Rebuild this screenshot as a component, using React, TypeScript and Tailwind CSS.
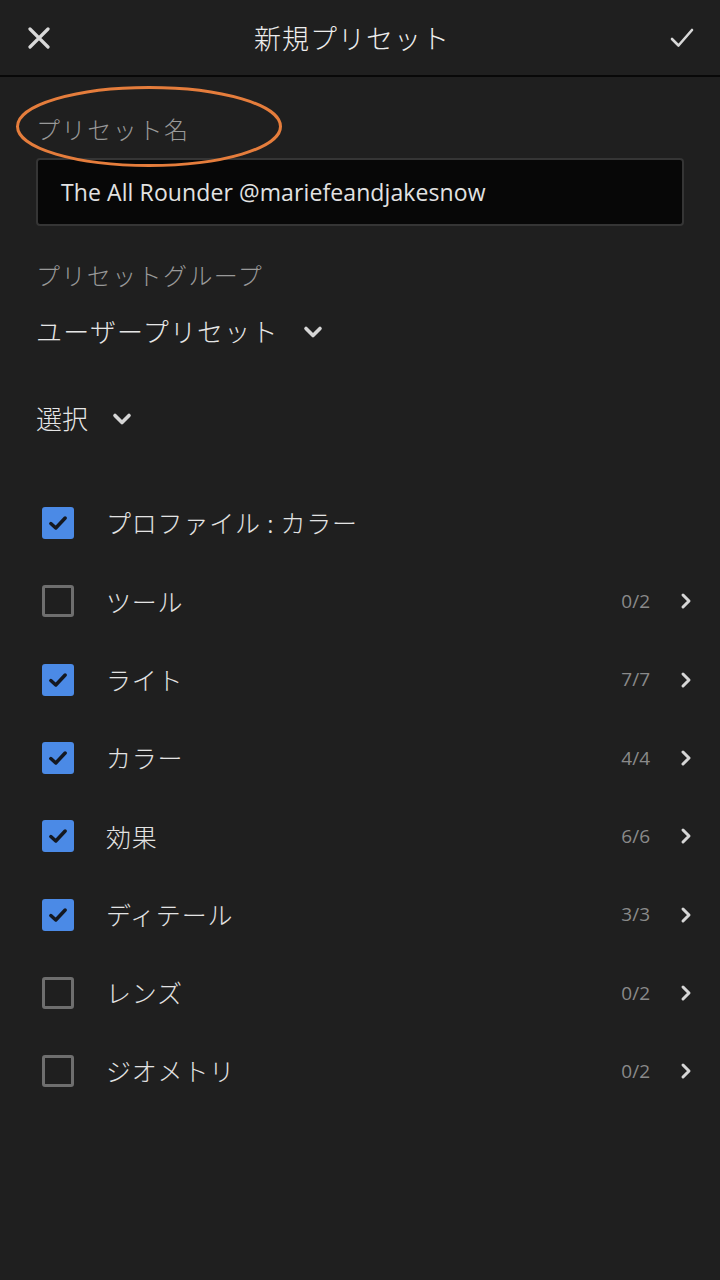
import React from "react";

const JP = { fontFamily: '"Noto Sans CJK JP", "Noto Sans", sans-serif' };

function Chevron({ className = "" }: { className?: string }) {
  return (
    <svg viewBox="0 0 20 14" className={className} fill="none">
      <path d="M3 3.5 L10 10.5 L17 3.5" stroke="#d6d6d6" strokeWidth="3.6" strokeLinecap="round" strokeLinejoin="round" />
    </svg>
  );
}

function ChevronRight() {
  return (
    <svg viewBox="0 0 12 18" className="w-[12px] h-[18px]" fill="none">
      <path d="M3 3 L9 9 L3 15" stroke="#d6d6d6" strokeWidth="3" strokeLinecap="round" strokeLinejoin="round" />
    </svg>
  );
}

function Box({ checked }: { checked: boolean }) {
  if (checked) {
    return (
      <div className="w-[32px] h-[32px] rounded-[3px] bg-[#4b8ae6] flex items-center justify-center">
        <svg viewBox="0 0 20 20" className="w-[22px] h-[22px]" fill="none">
          <path d="M3.5 10.5 L8 14.5 L16.5 5.5" stroke="#141820" strokeWidth="3.2" strokeLinecap="round" strokeLinejoin="round" />
        </svg>
      </div>
    );
  }
  return <div className="w-[32px] h-[32px] rounded-[3px] border-[3px] border-[#6e6e6e]" />;
}

const rows: { label: string; checked: boolean; count?: string }[] = [
  { label: "プロファイル : カラー", checked: true },
  { label: "ツール", checked: false, count: "0/2" },
  { label: "ライト", checked: true, count: "7/7" },
  { label: "カラー", checked: true, count: "4/4" },
  { label: "効果", checked: true, count: "6/6" },
  { label: "ディテール", checked: true, count: "3/3" },
  { label: "レンズ", checked: false, count: "0/2" },
  { label: "ジオメトリ", checked: false, count: "0/2" },
];

export default function App() {
  return (
    <div className="w-[720px] h-[1280px] bg-[#1f1f1f] relative overflow-hidden font-light" style={JP}>
      {/* Header */}
      <div className="h-[77px] border-b-2 border-[#080808] flex items-center justify-between px-[28px]">
        <svg viewBox="0 0 22 22" className="w-[22px] h-[22px]" fill="none">
          <path d="M2 2 L20 20 M20 2 L2 20" stroke="#d9d9d9" strokeWidth="3.2" strokeLinecap="round" />
        </svg>
        <div className="text-[27px] text-[#ededed] leading-none tracking-[1px] mr-[16px]">新規プリセット</div>
        <svg viewBox="0 0 24 20" className="w-[24px] h-[20px] mr-[-2px]" fill="none">
          <path d="M2 11 L8.5 17.5 L22 2" stroke="#d9d9d9" strokeWidth="2.6" strokeLinecap="round" strokeLinejoin="round" />
        </svg>
      </div>

      <div className="px-[36px] flex flex-col">
        <div className="mt-[34px] h-[36px] flex items-center text-[24px] text-[#999999] tracking-[1.6px]">プリセット名</div>
        <div className="mt-[11px] h-[68px] rounded-[4px] border-2 border-[#353535] bg-[#070707] flex items-center px-[23px]">
          <span className="text-[23px] text-[#e2e2e2] font-normal tracking-[0.1px]" style={{ fontFamily: '"Open Sans", "Noto Sans", sans-serif' }}>
            The All Rounder @mariefeandjakesnow
          </span>
        </div>

        <div className="mt-[31px] h-[36px] flex items-center text-[24px] text-[#999999] tracking-[1.4px]">プリセットグループ</div>
        <div className="mt-[17px] h-[40px] flex items-center gap-[24px] text-[26px] text-[#e6e6e6] tracking-[1.2px]">
          <span>ユーザープリセット</span>
          <Chevron className="w-[20px] h-[14px] mt-[4px]" />
        </div>

        <div className="mt-[47px] h-[40px] flex items-center gap-[24px] text-[26px] text-[#e6e6e6]">
          <span>選択</span>
          <Chevron className="w-[20px] h-[14px] mt-[4px]" />
        </div>

        <div className="mt-[47px] flex flex-col pl-[6px]">
          {rows.map((r, i) => (
            <div key={i} className="h-[78.3px] flex items-center">
              <Box checked={r.checked} />
              <span className="ml-[32px] text-[25px] text-[#e3e3e3] flex-1 tracking-[0.8px]">{r.label}</span>
              {r.count && (
                <>
                  <span className="text-[19px] text-[#8a8a8a] font-normal" style={{ fontFamily: '"Open Sans", "Noto Sans", sans-serif' }}>{r.count}</span>
                  <span className="ml-[30px] mr-[-8px] flex items-center">
                    <ChevronRight />
                  </span>
                </>
              )}
            </div>
          ))}
        </div>
      </div>

      {/* Annotation ellipse */}
      <svg className="absolute left-0 top-0 pointer-events-none" width="720" height="200" viewBox="0 0 720 200">
        <ellipse cx="149" cy="126.5" rx="131.5" ry="39" fill="none" stroke="#e57d3c" strokeWidth="3" />
      </svg>
    </div>
  );
}
